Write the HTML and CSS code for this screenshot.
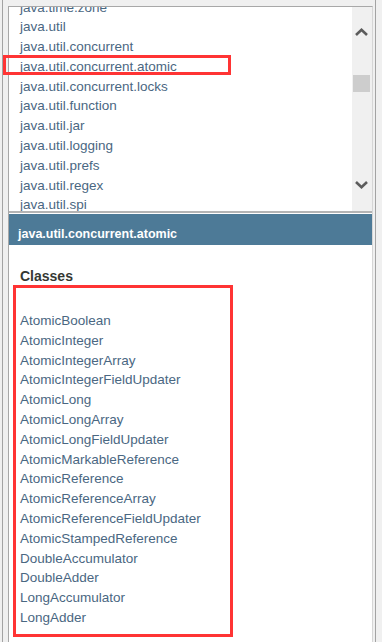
FILE: index.html
```html
<!DOCTYPE html>
<html>
<head>
<meta charset="utf-8">
<link rel="stylesheet" href="styles.css">
</head>
<body>
<div class="app">
  <div class="frame">
    <div class="panel">
      <div class="pkgs">
        <ul class="pkglist">
          <li>java.time.zone</li>
          <li>java.util</li>
          <li>java.util.concurrent</li>
          <li>java.util.concurrent.atomic</li>
          <li>java.util.concurrent.locks</li>
          <li>java.util.function</li>
          <li>java.util.jar</li>
          <li>java.util.logging</li>
          <li>java.util.prefs</li>
          <li>java.util.regex</li>
          <li>java.util.spi</li>
        </ul>
        <div class="scrollbar">
          <svg class="arrow" width="20" height="12" viewBox="0 0 20 12"><path d="M4 9 L9.5 3.8 L15 9" fill="none" stroke="#5c5c5c" stroke-width="2.6"/></svg>
          <div class="thumb"></div>
          <svg class="arrow down" width="20" height="12" viewBox="0 0 20 12"><path d="M4 3 L9.5 8.2 L15 3" fill="none" stroke="#5c5c5c" stroke-width="2.6"/></svg>
        </div>
      </div>
      <div class="bar">java.util.concurrent.atomic</div>
      <div class="classes">
        <h2 class="title">Classes</h2>
        <ul class="classlist">
          <li>AtomicBoolean</li>
          <li>AtomicInteger</li>
          <li>AtomicIntegerArray</li>
          <li>AtomicIntegerFieldUpdater</li>
          <li>AtomicLong</li>
          <li>AtomicLongArray</li>
          <li>AtomicLongFieldUpdater</li>
          <li>AtomicMarkableReference</li>
          <li>AtomicReference</li>
          <li>AtomicReferenceArray</li>
          <li>AtomicReferenceFieldUpdater</li>
          <li>AtomicStampedReference</li>
          <li>DoubleAccumulator</li>
          <li>DoubleAdder</li>
          <li>LongAccumulator</li>
          <li>LongAdder</li>
        </ul>
      </div>
    </div>
  </div>
  <div class="mark mark-pkg"></div>
  <div class="mark mark-classes"></div>
</div>
</body>
</html>
```

FILE: styles.css
```css
html, body {
  margin: 0;
  padding: 0;
}
body {
  width: 382px;
  height: 642px;
  overflow: hidden;
  background: #f0f0f0;
  font-family: "Liberation Sans", Arial, sans-serif;
}
.app {
  position: relative;
  height: 642px;
  padding-left: 2px;
  box-sizing: border-box;
  display: flex;
}
.frame {
  width: 374px;
  height: 642px;
  box-sizing: border-box;
  border-left: 1px solid #a3a3a3;
  border-right: 1px solid #a3a3a3;
  padding: 6px 2px 0 5px;
}
.panel {
  height: 636px;
  box-sizing: border-box;
  background: #fff;
  border-top: 1px solid #a8a8a8;
  border-left: 1px solid #a8a8a8;
  border-right: 1px solid #d6d6d6;
  display: flex;
  flex-direction: column;
}
.pkgs {
  height: 206px;
  box-sizing: border-box;
  border-bottom: 2px solid #b4b4b4;
  display: flex;
  overflow: hidden;
}
ul {
  list-style: none;
  margin: 0;
  padding: 0;
}
li {
  font-size: 13.5px;
  line-height: 19.8px;
  color: #4a6782;
  white-space: nowrap;
}
.pkglist {
  flex: 1;
  padding-left: 11px;
  margin-top: -9.5px;
  overflow: hidden;
}
.scrollbar {
  width: 20px;
  background: #f0f0f0;
  display: flex;
  flex-direction: column;
  padding-top: 19px;
  box-sizing: border-box;
}
.arrow {
  display: block;
}
.thumb {
  margin: 37px 0 0 1px;
  width: 17px;
  height: 17px;
  background: #cdcdcd;
}
.arrow.down {
  margin-top: 87px;
}
.bar {
  margin-top: 1px;
  height: 31px;
  box-sizing: border-box;
  background: #4d7a97;
  color: #fff;
  font-weight: bold;
  font-size: 12.5px;
  line-height: 15px;
  padding: 13px 0 0 9px;
}
.classes {
  padding: 23px 0 0 11px;
}
.title {
  margin: 0;
  font-size: 14px;
  line-height: 16px;
  font-weight: bold;
  color: #353833;
}
.classlist {
  margin-top: 27px;
}
.classlist li {
  line-height: 19.8px;
}
.mark {
  position: absolute;
  border: 3px solid #ff3434;
  box-sizing: border-box;
}
.mark-pkg {
  left: 3px;
  top: 55px;
  width: 228px;
  height: 20px;
}
.mark-classes {
  left: 13px;
  top: 285px;
  width: 220px;
  height: 352px;
}
```
